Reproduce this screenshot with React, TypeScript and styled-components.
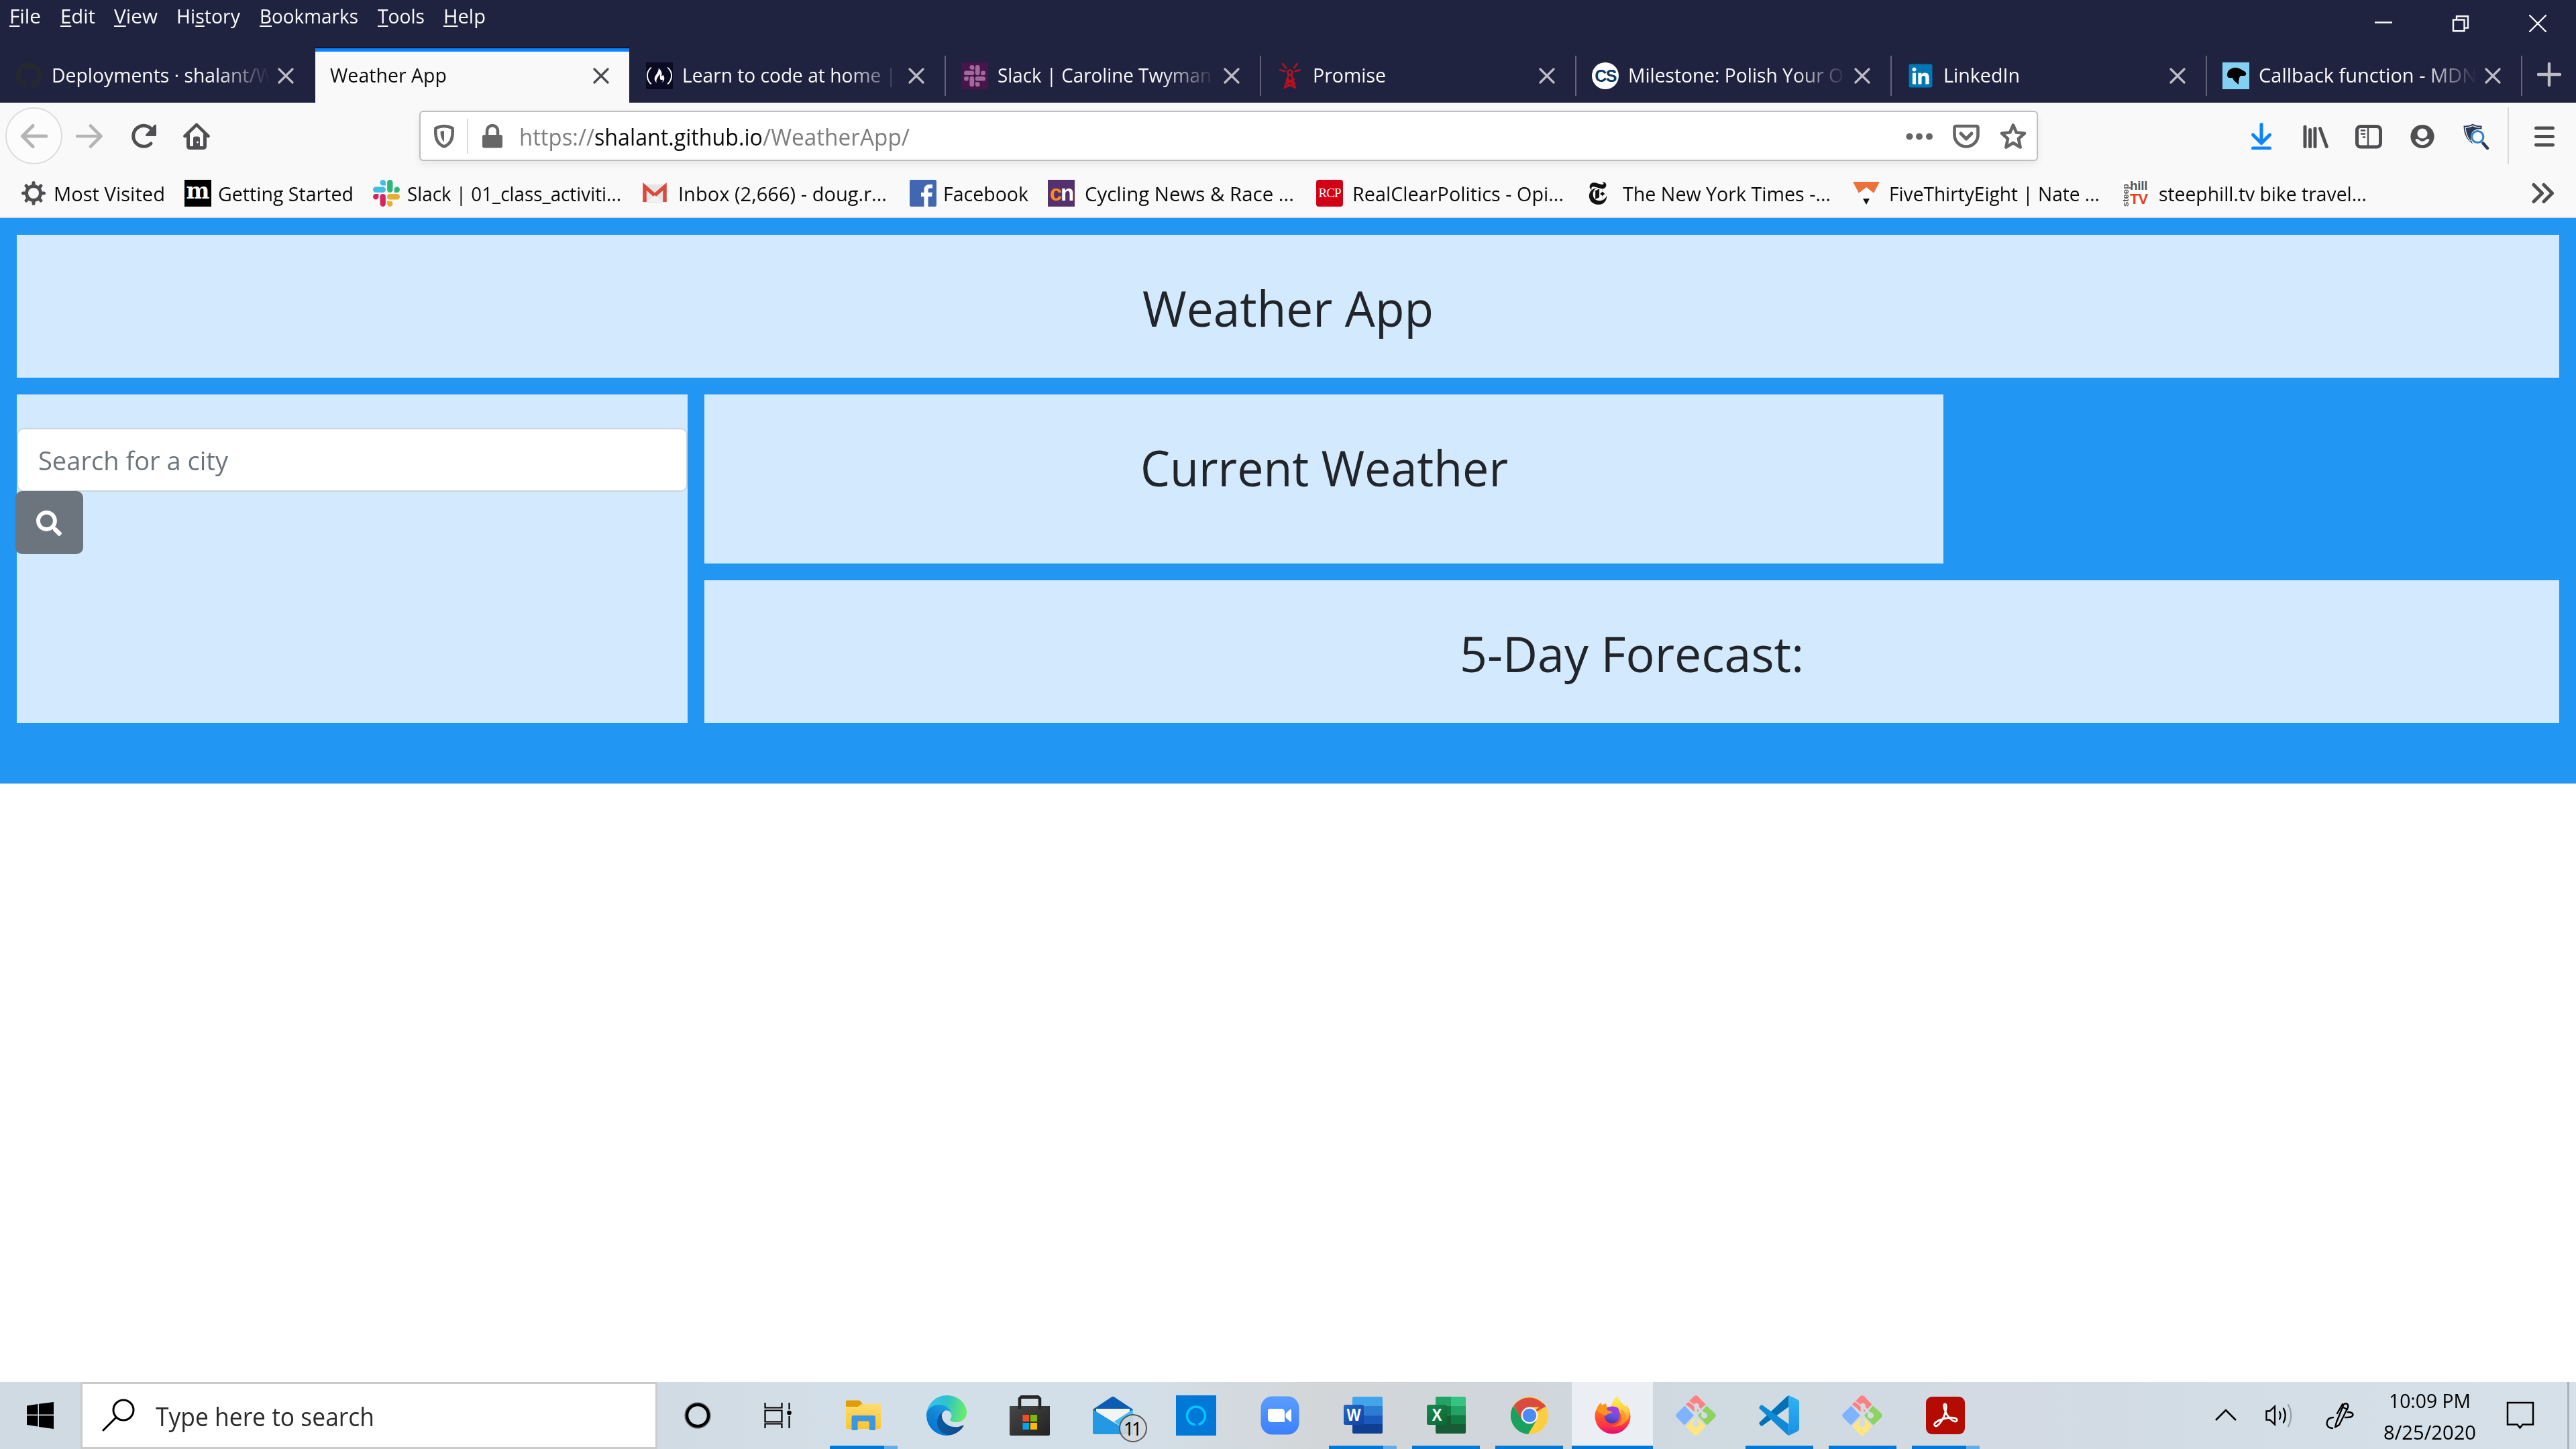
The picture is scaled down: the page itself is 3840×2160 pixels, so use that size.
import React, { useLayoutEffect, useRef, useState } from 'react';
import styled, { createGlobalStyle, css } from 'styled-components';
import { FaGithub, FaLinkedin, FaSearch } from 'react-icons/fa';
import { SiFreecodecamp, SiNewyorktimes } from 'react-icons/si';

const GlobalStyle = createGlobalStyle`
  *, *::before, *::after { box-sizing: border-box; }
  html, body { margin: 0; padding: 0; background: #fff; }
  body { font-family: "Open Sans", "Noto Sans", sans-serif; overflow: hidden; }
  svg { display: block; flex: none; }
`;

/* ---------- text set to a fixed measure ---------- */

const Measure = styled.span<{ $w: number }>`
  display: block;
  flex: none;
  width: ${p => p.$w}px;
  white-space: pre;
`;
const Glyphs = styled.span`
  display: inline-block;
  transform-origin: 0 50%;
`;

function Label({ w, children }: { w: number; children: React.ReactNode }) {
  const ref = useRef<HTMLSpanElement>(null);
  const [scale, setScale] = useState(1);
  useLayoutEffect(() => {
    if (ref.current && ref.current.offsetWidth) setScale(w / ref.current.getBoundingClientRect().width);
  }, [w]);
  return (
    <Measure $w={w}>
      <Glyphs ref={ref} style={{ transform: `scaleX(${scale})` }}>{children}</Glyphs>
    </Measure>
  );
}

/* ---------- layout parts ---------- */

const Screen = styled.div`
  width: 3840px;
  height: 2160px;
  display: flex;
  flex-direction: column;
  background: #fff;
`;

const TitleBar = styled.header`
  height: 72px;
  flex: none;
  display: flex;
  justify-content: space-between;
  background: #202340;
  color: #f9f9fa;
`;
const MenuList = styled.nav`
  display: flex;
  height: 49px;
  padding-left: 14px;
  font-size: 29.4px;
  line-height: 49px;
`;
const MenuEntry = styled.span<{ $after: number }>`
  margin-right: ${p => p.$after}px;
`;
const Accel = styled.span`
  text-decoration: underline;
  text-decoration-thickness: 2px;
  text-underline-offset: 3px;
  text-decoration-skip-ink: none;
`;
const WindowControls = styled.div`
  display: flex;
  align-items: center;
  gap: 89px;
  height: 70px;
  padding-right: 44px;
`;

const TabStrip = styled.div`
  height: 81px;
  flex: none;
  display: flex;
  background: #202340;
  box-shadow: inset 0 -1px 0 #12132b;
`;
const Tab = styled.div<{ $active?: boolean; $sep?: boolean }>`
  position: relative;
  width: 470px;
  height: 81px;
  flex: none;
  display: flex;
  align-items: center;
  padding: 1px 0 0 23px;
  color: #f9f9fa;
  font-size: 29.4px;
  line-height: 44px;
  &::after {
    content: "";
    display: ${p => (p.$sep ? 'block' : 'none')};
    position: absolute;
    right: 0;
    top: 11px;
    width: 2px;
    height: 60px;
    background: #62647a;
  }
  ${p =>
    p.$active &&
    css`
      background: #f9f9fa;
      color: #0c0c0d;
      border-top: 5px solid #0a84ff;
      padding-top: 0;
      padding-bottom: 4px;
      width: 468px;
      margin-right: 2px;
      box-shadow: 0 -2px 0 #12132b;
    `}
`;
const TabTitle = styled.div<{ $fade?: boolean; $lead: number }>`
  flex: 1;
  overflow: hidden;
  margin: 0 0 2px ${p => p.$lead}px;
  ${p => p.$fade && css`mask-image: linear-gradient(to right, #000 calc(100% - 80px), transparent 100%);`}
`;
const CloseSlot = styled.div<{ $active?: boolean }>`
  width: 24px;
  margin: 0 ${p => (p.$active ? 30 : 32)}px 0 12px;
  color: ${p => (p.$active ? '#4a4a4f' : '#bbbcc6')};
`;
const NewTab = styled.div`
  flex: 1;
  display: flex;
  align-items: center;
  justify-content: center;
  padding-bottom: 3px;
`;

const Toolbar = styled.div`
  height: 99px;
  flex: none;
  display: flex;
  align-items: center;
  background: #f9f9fa;
  padding-left: 8px;
  color: #4f4f52;
`;
const BackButton = styled.div`
  width: 85px;
  height: 85px;
  border: 2px solid #dcdcdd;
  border-radius: 50%;
  background: #fcfcfc;
  display: flex;
  align-items: center;
  justify-content: center;
  color: #b5b5b6;
`;
const IconSlot = styled.div<{ $before: number; $color?: string }>`
  margin-left: ${p => p.$before}px;
  color: ${p => p.$color ?? 'inherit'};
`;
const UrlBar = styled.div`
  margin-left: 312px;
  width: 2413px;
  height: 75px;
  display: flex;
  align-items: center;
  border: 2px solid #bebebf;
  border-radius: 6px;
  background: #fff;
  box-shadow: 0 5px 12px rgba(0, 0, 0, 0.07);
  padding: 0 15px;
  color: #666667;
`;
const UrlText = styled.div`
  flex: 1;
  display: flex;
  margin: 3px 0 0 20px;
  font-size: 34px;
  line-height: 50px;
  color: #7e7e7f;
`;
const Host = styled.span`
  color: #0c0c0d;
`;
const Rule = styled.div<{ $h: number; $before: number }>`
  width: 2px;
  height: ${p => p.$h}px;
  margin-left: ${p => p.$before}px;
  background: #dadadb;
`;
const UrlActions = styled.div`
  display: flex;
  gap: 30px;
`;

const BookmarkBar = styled.div`
  height: 73px;
  flex: none;
  display: flex;
  align-items: center;
  background: #f9f9fa;
  border-bottom: 2px solid #dededf;
  padding-left: 30px;
  font-size: 29.4px;
  line-height: 44px;
  color: #0c0c0d;
`;
const Bookmark = styled.div<{ $after: number; $gap: number }>`
  display: flex;
  align-items: center;
  gap: ${p => p.$gap + 1}px;
  margin-right: ${p => p.$after}px;
`;
const BookmarkTitle = styled.div`
  padding-top: 2px;
`;
const Tile = styled.div<{ $bg: string; $fg: string; $size: number; $serif?: boolean; $r?: number; $narrow?: number }>`
  width: 40px;
  height: 40px;
  display: flex;
  align-items: center;
  justify-content: center;
  border-radius: ${p => p.$r ?? 0}px;
  background: ${p => p.$bg};
  color: ${p => p.$fg};
  font: ${p => (p.$serif ? 'normal' : 'bold')} ${p => p.$size}px/36px ${p => (p.$serif ? '"Liberation Serif", serif' : '"Liberation Sans", sans-serif')};
  letter-spacing: ${p => p.$narrow ?? 0}px;
`;
const SlabM = styled.b`
  font: bold 33px/40px "DejaVu Serif", serif;
  padding-bottom: 5px;
`;
const Orange = styled.span`
  color: #ff8a1f;
`;
const SteepIcon = styled.div`
  width: 40px;
  height: 40px;
  display: flex;
  background: #fff;
  font-family: "Liberation Sans", sans-serif;
  font-weight: bold;
  color: #555;
`;
const SteepSide = styled.span`
  writing-mode: vertical-rl;
  transform: rotate(180deg);
  width: 12px;
  height: 40px;
  font-size: 13px;
  line-height: 12px;
`;
const SteepStack = styled.span`
  display: flex;
  flex-direction: column;
  width: 28px;
  font-size: 19px;
  line-height: 18px;
  letter-spacing: -0.3px;
`;
const SteepTv = styled.span`
  color: #f03a1c;
  font-size: 22px;
  line-height: 22px;
  letter-spacing: -1px;
`;
const Overflow = styled.div`
  margin-left: auto;
  margin-right: 32px;
  color: #4f4f52;
`;

/* ---------- weather page ---------- */

const WeatherGrid = styled.main`
  height: 843px;
  flex: none;
  display: grid;
  grid-template-columns: 1000px 1847px 893px;
  grid-template-rows: 213px 252px 213px;
  gap: 25px;
  padding: 25px;
  background: #2196f3;
`;
const Panel = styled.section<{ $area: string }>`
  grid-area: ${p => p.$area};
  background: #d3e9fd;
  padding: 50px 0;
`;
const Heading = styled.h1`
  margin: 0;
  display: flex;
  justify-content: center;
  font-size: 74px;
  font-weight: 400;
  line-height: 118px;
  color: #212529;
`;
const CityField = styled.div`
  height: 95px;
  display: flex;
  align-items: center;
  padding: 1px 0 0 30px;
  border: 2px solid #ced4da;
  border-radius: 10px;
  background: #fff;
  color: #6c757d;
  font-size: 39px;
  line-height: 58px;
`;
const SearchButton = styled.div`
  width: 101px;
  height: 94px;
  margin-left: -2px;
  margin-top: -1px;
  display: flex;
  align-items: center;
  justify-content: center;
  padding: 2px 2px 0 0;
  border-radius: 10px;
  background: #6c757d;
  color: #fff;
`;

/* ---------- task bar ---------- */

const TaskBar = styled.footer`
  margin-top: auto;
  height: 100px;
  display: flex;
  background: linear-gradient(to right, #d0dae3 0, #d1dbe4 980px, #d3dfe8 1300px, #d3dfe8 1700px, #d3d6d8 1960px, #d0d6dc 2280px, #cfdae1 2560px, #d3dae3 3000px, #d2dde6 3300px, #d5e0e9 3840px);
`;
const Start = styled.div`
  width: 120px;
  display: flex;
  align-items: center;
  justify-content: center;
`;
const TaskSearch = styled.div`
  width: 860px;
  display: flex;
  align-items: center;
  gap: 30px;
  padding-left: 29px;
  border: 3px solid #cbcbcb;
  background: #fff;
  color: #2b2b2b;
  font-size: 37.5px;
  line-height: 54px;
`;
const TaskSearchText = styled.div`
  padding-top: 4px;
`;
const ShellButton = styled.div`
  width: 120px;
  display: flex;
  align-items: center;
  justify-content: center;
`;
const AppList = styled.div`
  display: flex;
  margin-left: 5px;
`;
const AppButton = styled.div<{ $state?: 'open' | 'multi' | 'active' }>`
  position: relative;
  width: 121px;
  height: 100px;
  margin: 0 1.55px;
  display: flex;
  align-items: center;
  justify-content: center;
  background: ${p => (p.$state === 'active' ? '#ebeff3' : 'transparent')};
  &::after {
    content: "";
    position: absolute;
    bottom: 0;
    height: 5px;
    left: ${p => (p.$state === 'active' ? 0 : 10)}px;
    right: ${p => (p.$state === 'active' ? 0 : 10)}px;
    display: ${p => (p.$state ? 'block' : 'none')};
    background: ${p => (p.$state === 'multi' ? 'linear-gradient(to right, #0078d7 81px, #65ade8 81px)' : '#0078d7')};
  }
`;
const Badge = styled.div`
  position: absolute;
  left: 69px;
  top: 48px;
  width: 42px;
  height: 42px;
  border: 2px solid #55595d;
  border-radius: 50%;
  background: rgba(214, 216, 218, 0.85);
  color: #000;
  display: flex;
  align-items: center;
  justify-content: center;
  font: 500 28px/38px "Open Sans", sans-serif;
  letter-spacing: -4px;
  padding-right: 4px;
`;
const Tray = styled.div`
  margin-left: auto;
  display: flex;
  align-items: center;
`;
const TrayItem = styled.div<{ $after: number }>`
  margin-right: ${p => p.$after}px;
`;
const Clock = styled.div`
  display: flex;
  flex-direction: column;
  align-items: center;
  width: 138px;
  margin-right: 45px;
  padding-top: 3px;
  font-size: 29.4px;
  line-height: 47px;
  color: #000;
`;
const ShowDesktop = styled.div`
  width: 13px;
  height: 100px;
  border-left: 3px solid #a9b3bb;
`;

/* ---------- line icons ---------- */

type BoxProps = { w?: number; h?: number; vb?: string; children: React.ReactNode };
const Ico = ({ w = 40, h = 40, vb, children }: BoxProps) => (
  <svg width={w} height={h} viewBox={vb ?? `0 0 ${w} ${h}`} fill="none" stroke="currentColor" strokeLinecap="round" strokeLinejoin="round">
    {children}
  </svg>
);

const Cross = () => (
  <Ico w={24} h={24}><path d="M2 2 22 22M22 2 2 22" strokeWidth="3.2" /></Ico>
);
const ArrowLeft = () => (
  <Ico><path d="M38 20H3M18 4.500 2.500 20 18 35.500" strokeWidth="5" /></Ico>
);
const ArrowRight = () => (
  <Ico><path d="M2 20H37M22 4.500 37.500 20 22 35.500" strokeWidth="4.600" /></Ico>
);
const Reload = () => (
  <Ico>
    <path d="M31 31A15.500 15.500 0 1 1 33 11" strokeWidth="5" />
    <path d="M37.500 4V18.500H24.500Z" fill="currentColor" strokeWidth="3" />
  </Ico>
);
const Home = () => (
  <Ico>
    <path d="M2.500 20 20 2.800 37.500 20" strokeWidth="4.600" />
    <path d="M7.500 18V34.500Q7.500 37.500 10.500 37.500H29.500Q32.500 37.500 32.500 34.500V18" strokeWidth="5" />
    <path d="M15 37V23.500Q15 20.500 18 20.500H22Q25 20.500 25 23.500V37Z" fill="currentColor" stroke="none" />
    <circle cx="21.500" cy="29" r="1.500" fill="#f9f9fa" stroke="none" />
  </Ico>
);
const Shield = () => (
  <Ico>
    <path d="M20 5Q26 5 32.500 8Q33.500 17 31 25Q28 32.500 20 35.500Q12 32.500 9 25Q6.500 17 7.500 8Q14 5 20 5Z" strokeWidth="4.600" />
    <path d="M20 12Q17 12 14.500 13Q14.500 24 20 28.500Z" fill="currentColor" stroke="none" />
  </Ico>
);
const Lock = () => (
  <Ico>
    <rect x="5" y="18" width="30" height="19.500" rx="3" fill="currentColor" stroke="none" />
    <path d="M12 18V12A8 8 0 0 1 28 12V18" strokeWidth="4.500" />
  </Ico>
);
const Dots = () => (
  <Ico>
    <g fill="currentColor" stroke="none"><circle cx="5.500" cy="20.500" r="5" /><circle cx="20" cy="20.500" r="5" /><circle cx="35" cy="20.500" r="5" /></g>
  </Ico>
);
const Pocket = () => (
  <Ico>
    <path d="M5 5H35Q37.500 5 37.500 7.500V18A17.500 17.500 0 0 1 2.500 18V7.500Q2.500 5 5 5Z" strokeWidth="4.600" />
    <path d="M12 16 20 24 28 16" strokeWidth="5" />
  </Ico>
);
const Star = () => (
  <Ico><path d="M20 3.500 24.800 14.500 37 15.800 28 23.800 30.600 36.500 20 30 9.400 36.500 12 23.800 3 15.800 15.200 14.500Z" strokeWidth="4.600" /></Ico>
);
const Download = () => (
  <Ico>
    <path d="M20 2.500V29M7.500 18 20 30.500 32.500 18" strokeWidth="5" />
    <path d="M7.500 38H32.500" strokeWidth="5" />
  </Ico>
);
const Library = () => (
  <Ico>
    <path d="M5 6V35.500M12.600 10.500V35.500M20 8.500V35.500M27.500 8.500 37.300 35.500" strokeWidth="5" />
  </Ico>
);
const Sidebar = () => (
  <Ico>
    <rect x="2.500" y="5.500" width="35" height="30.500" rx="5.500" strokeWidth="5" />
    <path d="M19 6V35" strokeWidth="2.400" />
    <path d="M9 11.500H14M9 16.500H14M12 21.500H14" strokeWidth="2.600" />
  </Ico>
);
const Account = () => (
  <Ico>
    <circle cx="20" cy="20.500" r="17.600" fill="currentColor" stroke="none" />
    <circle cx="20" cy="16" r="7.600" fill="#f9f9fa" stroke="none" />
    <path d="M9.500 26Q9.500 23 14 24.500Q20 31 26 24.500Q30.500 23 30.500 26Q27 33.300 20 33.300Q13 33.300 9.500 26Z" fill="#f9f9fa" stroke="none" />
  </Ico>
);
const PrivacySearch = () => (
  <Ico>
    <path d="M1.500 4.500Q9 5 15 1.700Q21 5 28.500 4.500V9.500Q14 8 12 20Q11.500 26 15.500 31.500Q2 24 1.500 4.500Z" fill="#2a3a57" stroke="none" />
    <path d="M4 7Q5 20 11.500 27M4 7Q10 7 15 4.500Q20 7 26 7.200" stroke="#f4f4f5" strokeWidth="1.300" />
    <circle cx="22.300" cy="21" r="8.600" stroke="#2f83cc" strokeWidth="3" fill="#f9f9fa" />
    <path d="M30.500 30.500 37 38" stroke="#2a3a57" strokeWidth="4.400" />
  </Ico>
);
const Hamburger = () => (
  <Ico><path d="M7.500 8H32.500M7.500 20.500H32.500M7.500 33H32.500" strokeWidth="5" /></Ico>
);
const Chevrons = () => (
  <Ico w={34} h={32}><path d="M3 3.500 15.500 16 3 28.500M18 3.500 30.500 16 18 28.500" strokeWidth="5" /></Ico>
);
const Minimize = () => <Ico w={26} h={26}><path d="M0 11.500H26" strokeWidth="2.500" strokeLinecap="butt" /></Ico>;
const Restore = () => (
  <Ico w={26} h={26}>
    <path d="M2 7.500H18.500V24.200H2Z M7 7V2.200H24V19.500H19" strokeWidth="2.400" strokeLinejoin="miter" strokeLinecap="butt" />
  </Ico>
);
const WinClose = () => <Ico w={26} h={26}><path d="M1 1 25 25M25 1 1 25" strokeWidth="2.400" /></Ico>;
const Plus = () => (
  <Ico w={36} h={36}><path d="M18 2V34M2 18H34" stroke="#bbbcc6" strokeWidth="4.400" /></Ico>
);
const Gear = () => (
  <Ico>
    <circle cx="20" cy="20" r="10.500" strokeWidth="5" />
    <g strokeWidth="5"><path d="M20 4.500V7M20 33V35.500M4.500 20H7M33 20H35.500M9 9 10.800 10.800M29.200 29.200 31 31M9 31 10.800 29.200M29.200 10.800 31 9" /></g>
  </Ico>
);

/* ---------- brand icons ---------- */

const slackHues = { b: '#44bee0', g: '#2eb67d', r: '#d7265e', y: '#e8ae32' };
const Slack = ({ size = 40, hues = slackHues }: { size?: number; hues?: typeof slackHues }) => (
  <svg width={size} height={size} viewBox="0 0 40 40">
    <g fill={hues.b}><rect x="0" y="10.500" width="19" height="8.400" rx="4.200" /><path d="M14.800 0A4.200 4.200 0 0 1 19 4.200V8.400H14.800A4.200 4.200 0 0 1 14.800 0Z" /></g>
    <g fill={hues.g}><rect x="21.100" y="0" width="8.400" height="19" rx="4.200" /><path d="M40 14.700A4.200 4.200 0 0 1 35.800 18.900H31.600V14.700A4.200 4.200 0 0 1 40 14.700Z" /></g>
    <g fill={hues.y}><rect x="21" y="21.100" width="19" height="8.400" rx="4.200" /><path d="M25.300 40A4.200 4.200 0 0 1 21.100 35.800V31.600H25.300A4.200 4.200 0 0 1 25.300 40Z" /></g>
    <g fill={hues.r}><rect x="10.500" y="21" width="8.400" height="19" rx="4.200" /><path d="M0 25.300A4.200 4.200 0 0 1 4.200 21.100H8.400V25.300A4.200 4.200 0 0 1 0 25.300Z" /></g>
  </svg>
);
const mauve = '#a06b9c';
const SlackDim = () => (
  <Tile $bg="#48154a" $fg="#fff" $size={10}><Slack size={32} hues={{ b: mauve, g: mauve, r: mauve, y: mauve }} /></Tile>
);
const Tower = () => (
  <Ico>
    <g stroke="#b5121f" strokeWidth="2.600">
      <path d="M18 18 12 38M22 18 28 38M14.500 30 26 25M25.500 30 15 25M13 37 27 31M27 37 14 31" />
      <circle cx="20" cy="15" r="3.500" />
      <path d="M14 8 9 2M26 8 31 2M12.500 13 5 11.500M27.500 13 35 11.500M18 30H22" />
    </g>
  </Ico>
);
const Dino = () => (
  <Ico>
    <rect width="40" height="40" fill="#83d0f2" stroke="none" />
    <path d="M7 20Q6 12 14 9Q20 6 27 10L34 14Q37 18 33 20H27Q24 22 24 33L17 27L15 23L9 23Z" fill="#000" stroke="none" />
  </Ico>
);
const Gmail = () => (
  <Ico>
    <rect x="2" y="7" width="36" height="27" rx="2" fill="#e6e5e4" stroke="none" />
    <path d="M5 33V10L20 23 35 10V33" stroke="#d94a3d" strokeWidth="5.500" strokeLinejoin="miter" strokeLinecap="butt" />
    <path d="M8 33 20 23 32 33Z" fill="#f3f2f1" stroke="none" />
  </Ico>
);
const Facebook = () => (
  <Ico>
    <rect width="40" height="40" rx="2.500" fill="#4267b2" stroke="none" />
    <path d="M27.500 40V25H33L33.800 19H27.500V15.500C27.500 13.500 28.300 12.500 30.500 12.500H34V7.200C33 7 31.500 7 29.500 7C24.500 7 21.500 10 21.500 15V19H17V25H21.500V40Z" fill="#fff" stroke="none" />
  </Ico>
);
const Fox538 = () => (
  <Ico>
    <path d="M0 3H40L31 20 20 12 9 20Z" fill="#ed713a" stroke="none" />
    <path d="M9 20 20 11 31 20 25 28H15Z" fill="#fff" stroke="none" />
    <path d="M15 28H25L20 37Z" fill="#111" stroke="none" />
  </Ico>
);

const WinLogo = () => (
  <svg width="40" height="40" viewBox="0 0 40 40" fill="#000">
    <path d="M0 5.500 16.500 3V18.500H0ZM18 2.800 40 0V18.500H18ZM0 20.300H16.500V36.500L0 34ZM18 20.300H40V40L18 37Z" />
  </svg>
);
const BigLens = () => (
  <Ico w={50} h={50}><g stroke="#000" strokeWidth="3"><circle cx="32" cy="17" r="15" /><path d="M21 28 2 47" /></g></Ico>
);
const Cortana = () => (
  <svg width="40" height="40" viewBox="0 0 40 40" fill="none">
    <circle cx="20" cy="20" r="18.500" stroke="#7b8287" strokeWidth="2.500" />
    <circle cx="20" cy="20" r="16" stroke="#000" strokeWidth="4.500" />
  </svg>
);
const TaskView = () => (
  <Ico w={42} h={40}>
    <g stroke="#000" strokeWidth="2.200" strokeLinecap="butt" strokeLinejoin="miter">
      <path d="M1.500 12.500H26.500V29.500H1.500ZM1.500 1V8.500H26.500V1M1.500 39V32.500H26.500V39M37.500 1V11M37.500 21V39" />
      <circle cx="37.500" cy="16" r="3.300" fill="#000" stroke="none" />
    </g>
  </Ico>
);
const Explorer = () => (
  <svg width="54" height="46" viewBox="0 0 54 46">
    <defs><linearGradient id="ex" x2="0" y2="1"><stop offset="0" stopColor="#ffdb74" /><stop offset="1" stopColor="#fdc52e" /></linearGradient></defs>
    <path d="M1 10V2Q1 0.500 3 0.500H20Q22 0.500 23 2L26 6 23 10Z" fill="#e09d05" />
    <path d="M1 10H19L25 5.500H51Q53 5.500 53 8V40Q53 43 51 43H3Q1 43 1 41Z" fill="url(#ex)" />
    <path d="M9.500 45V26Q9.500 23 12.500 23H42Q45 23 45 26V45H36V34Q36 31.500 34 31.500H20.500Q18.500 31.500 18.500 34V45Z" fill="#3a97e0" />
  </svg>
);
const Edge = () => (
  <svg width="60" height="60" viewBox="0 0 256 256">
    <defs>
      <linearGradient id="e1" x1="60" y1="178" x2="240" y2="178" gradientUnits="userSpaceOnUse"><stop offset="0" stopColor="#0c59a4" /><stop offset="1" stopColor="#114a8b" /></linearGradient>
      <linearGradient id="e2" x1="150" y1="90" x2="40" y2="220" gradientUnits="userSpaceOnUse"><stop offset="0" stopColor="#1b9de2" /><stop offset="0.500" stopColor="#1485d6" /><stop offset="1" stopColor="#0078d4" /></linearGradient>
      <linearGradient id="e3" x1="20" y1="60" x2="240" y2="110" gradientUnits="userSpaceOnUse"><stop offset="0" stopColor="#35c1f1" /><stop offset="0.450" stopColor="#2dc3c8" /><stop offset="1" stopColor="#66eb6e" /></linearGradient>
    </defs>
    <path fill="url(#e1)" d="M231 190.500c-3.400 1.800-6.900 3.400-10.500 4.700a101 101 0 0 1-35.500 6.400c-46.700 0-87.400-32.100-87.400-73.400a31.200 31.200 0 0 1 16.300-27.200c-42.300 1.800-53.100 45.800-53.100 71.600 0 73 67.200 80.400 81.700 80.400 7.800 0 19.600-2.300 26.700-4.500l1.300-.4a128.300 128.300 0 0 0 66.600-52.800 4 4 0 0 0-6.100-4.800Z" />
    <path fill="url(#e2)" d="M105.700 241.400A79.200 79.200 0 0 1 83 220a80.700 80.700 0 0 1 29.500-120c3.100-1.500 8.500-4.100 15.500-4a32.400 32.400 0 0 1 25.700 13 31.900 31.900 0 0 1 6.400 18.700c0-.2 24.500-79.600-80-79.600-43.900 0-80 41.600-80 78.200a130 130 0 0 0 12.100 56 128 128 0 0 0 156.400 67 75.500 75.500 0 0 1-62.900-7.900Z" />
    <path fill="url(#e3)" d="M152.300 148.900c-.8 1-3.300 2.500-3.300 5.600 0 2.600 1.700 5.100 4.700 7.200 14.400 10 41.500 8.700 41.600 8.700a59.600 59.600 0 0 0 30.300-8.300A61.400 61.400 0 0 0 256 109.200c.3-22.400-8-37.300-11.300-43.900C223.500 23.800 177.700 0 128 0A128 128 0 0 0 0 126.200C.5 89.700 36.800 60.200 80 60.200c3.500 0 23.500.3 42 10 16.300 8.600 24.900 19 30.900 29.300 6.200 10.700 7.200 24.100 7.200 29.500s-2.700 13.400-7.800 19.900Z" />
  </svg>
);
const Store = () => (
  <svg width="60" height="60" viewBox="0 0 60 60">
    <defs><linearGradient id="st" x2="1" y2="1"><stop offset="0" stopColor="#474747" /><stop offset="1" stopColor="#222" /></linearGradient></defs>
    <path d="M0 16H60V58Q60 60 58 60H2Q0 60 0 58Z" fill="url(#st)" />
    <path d="M15 20V5L18.500 1.500H41.500L45 5V20" fill="none" stroke="#262626" strokeWidth="4.500" />
    <path d="M17 2.500H43" stroke="#262626" strokeWidth="5" />
    <path d="M19.500 29H29V39H19.500Z" fill="#f25022" /><path d="M31 29H41V39H31Z" fill="#7fba00" />
    <path d="M19.500 41H29V51H19.500Z" fill="#00a4ef" /><path d="M31 41H41V51H31Z" fill="#ffb900" />
  </svg>
);
const Mail = () => (
  <svg width="60" height="58" viewBox="0 0 60 58">
    <path d="M0 20 28 1.500Q30 0 32 1.500L60 20V24L0 24Z" fill="#0a5cb5" />
    <path d="M5 19H55V24L32 40H28L5 26Z" fill="#f3f3f4" />
    <path d="M0 20 60 57H2Q0 57 0 55Z" fill="#2299e2" />
    <path d="M60 20 32 38 60 56Z" fill="#55c5f2" /><path d="M32 38 60 20V57H58Z" fill="#4abdf0" />
  </svg>
);
const Alexa = () => (
  <svg width="60" height="60" viewBox="0 0 60 60" fill="none">
    <rect width="60" height="60" fill="#0078d7" />
    <path d="M26.500 43.500A13.500 13.500 0 1 1 33.500 43.500" stroke="#00c8ff" strokeWidth="3.400" />
    <path d="M26 41Q30 43 30 46Q27 45 24.500 42Z" fill="#00c8ff" />
  </svg>
);
const Zoom = () => (
  <svg width="58" height="58" viewBox="0 0 58 58">
    <defs><linearGradient id="zm" x2="0" y2="1"><stop offset="0" stopColor="#5a9dff" /><stop offset="1" stopColor="#3c80fb" /></linearGradient></defs>
    <rect x="0.500" y="0.500" width="57" height="57" rx="17" fill="url(#zm)" />
    <path d="M14 19H31Q36 19 36 24V39H17Q11 39 11 33V22Q11 19 14 19ZM37.500 26 44 20Q46 19 46 21V37Q46 39 44 38L37.500 32Z" fill="#fff" />
  </svg>
);
const OfficeLetter = styled.text`
  font: bold 25px "Liberation Sans", sans-serif;
  fill: #fff;
  text-anchor: middle;
`;
const Word = () => (
  <svg width="60" height="56" viewBox="0 0 60 56">
    <defs><linearGradient id="wd" x2="1" y2="1"><stop offset="0" stopColor="#2368c4" /><stop offset="1" stopColor="#1143a6" /></linearGradient></defs>
    <path d="M14 2Q14 0 16 0H57Q59 0 59 2V13.500H14Z" fill="#41a5ee" /><path d="M14 13.500H59V27.500H14Z" fill="#2b7cd3" />
    <path d="M14 27.500H59V41H14Z" fill="#185abd" /><path d="M14 41H59V53Q59 55 57 55H16Q14 55 14 53Z" fill="#103f91" />
    <rect x="1" y="12" width="30" height="30" rx="2.500" fill="url(#wd)" />
    <OfficeLetter x="16" y="36" textLength="21" lengthAdjust="spacingAndGlyphs">W</OfficeLetter>
  </svg>
);
const Excel = () => (
  <svg width="60" height="56" viewBox="0 0 60 56">
    <defs><linearGradient id="xl" x2="1" y2="1"><stop offset="0" stopColor="#18884f" /><stop offset="1" stopColor="#0b6631" /></linearGradient></defs>
    <path d="M14 2Q14 0 16 0H37V13.500H14Z" fill="#21a366" /><path d="M37 0H57Q59 0 59 2V13.500H37Z" fill="#33c481" />
    <path d="M14 13.500H37V27.500H14Z" fill="#107c41" /><path d="M37 13.500H59V27.500H37Z" fill="#21a366" />
    <path d="M14 27.500H59V41H14Z" fill="#185c37" /><path d="M37 27.500H59V41H37Z" fill="#107c41" />
    <path d="M14 41H59V53Q59 55 57 55H16Q14 55 14 53Z" fill="#185c37" />
    <rect x="1" y="12" width="30" height="30" rx="2.500" fill="url(#xl)" />
    <OfficeLetter x="16" y="36" textLength="15" lengthAdjust="spacingAndGlyphs">X</OfficeLetter>
  </svg>
);
const Chrome = () => (
  <svg width="56" height="56" viewBox="0 0 56 56">
    <circle cx="28" cy="28" r="28" fill="#ffcd40" />
    <path d="M28 28 51.500 15A28 28 0 0 0 4.500 13.500L16 34 28 15.500H52.500A28 28 0 0 0 49 10Z" fill="#db4a3f" />
    <path d="M4 13.500A28 28 0 0 0 26 56L38.500 35 28 40 17 34.500Z" fill="#1aa15f" />
    <circle cx="28" cy="28" r="12.500" fill="#f4f4f4" /><circle cx="28" cy="28" r="10.200" fill="#4c8bf5" />
  </svg>
);
const Firefox = () => (
  <svg width="54" height="56" viewBox="0 0 54 56">
    <defs>
      <linearGradient id="f1" x2="0" y2="1"><stop offset="0.150" stopColor="#ff9a1a" /><stop offset="0.500" stopColor="#ff5a2c" /><stop offset="0.780" stopColor="#ff3344" /><stop offset="1" stopColor="#dc0c7c" /></linearGradient>
      <linearGradient id="f3" x2="0" y2="1"><stop offset="0" stopColor="#fff44f" /><stop offset="0.450" stopColor="#ffd23a" /><stop offset="1" stopColor="#ff6a2a" /></linearGradient>
      <linearGradient id="f2" x1="0.600" y1="0" x2="0.400" y2="1"><stop offset="0" stopColor="#b535e6" /><stop offset="0.550" stopColor="#6a52e0" /><stop offset="1" stopColor="#4535a5" /></linearGradient>
    </defs>
    <path d="M34 0Q38 8 43 12Q45.500 14 47 17Q47.500 14 46.500 12Q53 19 53.500 29A26.500 26.500 0 0 1 0.500 29Q0.500 22 4 17Q5 12 10 9L10.500 13.500Q13 11 17 10.500L18 15.500Q22 15 25 16Q26 6 34 0Z" fill="url(#f1)" />
    <path d="M34 0Q25.500 6 25 16Q36 18 40 28Q42 36 36 44Q50 39 52.500 27Q52 18 46.500 12Q47.500 14 47 17Q45.500 14 43 12Q38 8 34 0Z" fill="url(#f3)" />
    <path d="M26 14.500Q32 14 35 17L36.500 20Q38 24 37.500 28.500A11.500 11.500 0 0 1 14.500 28Q14.500 15 26 14.500Z" fill="url(#f2)" />
    <path d="M10 9Q5 14 3 21Q9 25 14.500 28Q18 28 20 25.500Q24 25.500 26.500 23.500Q25 21 19.500 20.500Q18 18 18 15.500L17 10.500Q13 11 10.500 13.500Z" fill="#ff9219" />
    <path d="M38 20Q42 27 39 35Q34 43 25 44Q37 46 44 38Q49 28 42 20Z" fill="#ff8e22" opacity="0.700" />
  </svg>
);
const GitApp = () => (
  <svg width="60" height="60" viewBox="0 0 60 60">
    <path d="M27 1.500Q30 -1 33 1.500L44.500 13.500 30.500 27 15 13.500Z" fill="#ff8080" />
    <path d="M13.500 15.500 27 30 13 44.500 1.500 33Q-1 30 1.500 27Z" fill="#80b3ff" />
    <path d="M46 15.500 58.500 27Q61 30 58.500 33L46.500 44.500 33 30Z" fill="#8dd35f" />
    <path d="M30 32 45 46 33 58.500Q30 61.500 27 58.500L15 46Z" fill="#ffe680" />
    <g stroke="#d2dce3" fill="none" strokeLinecap="round">
      <path d="M20 9.500 32 18" strokeWidth="2" />
      <path d="M30 15V43" strokeWidth="4.500" />
      <path d="M31 16 42 28" strokeWidth="3.500" />
      <path d="M19 18 30 30" strokeWidth="2.500" />
    </g>
    <g fill="#d2dce3"><circle cx="31" cy="15.500" r="3.800" /><circle cx="42.500" cy="30" r="4.600" /><circle cx="30" cy="42.500" r="4.800" /></g>
  </svg>
);
const VsCode = () => (
  <svg width="60" height="60" viewBox="0 0 60 60">
    <defs><linearGradient id="vs" x2="0" y2="1"><stop offset="0" stopColor="#2db4f5" /><stop offset="1" stopColor="#1a8fe6" /></linearGradient></defs>
    <path d="M44.500 0.500V17L5 45.500Q3.500 46 2.500 45L0.500 42.500Q0 41 1 40L42 1.500Q43.500 0 44.500 0.500Z" fill="#0071b5" />
    <path d="M44.500 59.500V43L5 14.500Q3.500 14 2.500 15L0.500 17.500Q0 19 1 20L42 58.500Q43.500 60 44.500 59.500Z" fill="#0e8bd8" />
    <path d="M44.500 0 57 6Q60 7.500 60 10V50Q60 52.500 57 54L44.500 60Z" fill="url(#vs)" />
  </svg>
);
const Acrobat = () => (
  <svg width="58" height="56" viewBox="0 0 58 56" fill="none">
    <rect width="58" height="56" rx="9" fill="#b30b00" />
    <path d="M13 43C10 39 20 34 31 32C40 30 48 32 46 36C43 40 33 32 29 22C26 15 26 11 28.500 11C31.500 11 30.500 20 27 29C22 40 16 46 13 43Z" stroke="#fff" strokeWidth="2.800" />
  </svg>
);
const Caret = () => <Ico w={34} h={20}><path d="M2 17 17 2 32 17" stroke="#000" strokeWidth="2.600" strokeLinecap="butt" strokeLinejoin="miter" /></Ico>;
const Speaker = () => (
  <Ico w={42} h={38}>
    <g stroke="#000" strokeWidth="2.300" strokeLinejoin="miter">
      <path d="M1.500 12.500H6.500L14 5.500V32.500L6.500 25.500H1.500Z" />
      <path d="M21 13.500Q24 19 21 24.500M27 8.500Q32.500 19 27 29.500" />
      <path d="M34 3Q42.500 19 34 35.500" stroke="#98a1a8" />
    </g>
  </Ico>
);
const Pen = () => (
  <Ico w={42} h={42}>
    <g stroke="#000" strokeWidth="2.400">
      <path d="M16 31 14 38.500 20 35 33 9Q34 5 31.500 3.500Q28.500 2.500 26.500 5L16 31M26 9 32 12" />
      <path d="M11 24Q2 24 1.500 33Q2 39.500 10 40M33 16Q40 16 40.500 20Q40 24.500 29 24M17 18 25 4" />
    </g>
  </Ico>
);
const Notice = () => <Ico w={42} h={42}><path d="M2 2H40V34.500H24.500L20.500 39.500 16.500 34.500H2Z" stroke="#000" strokeWidth="2.500" strokeLinejoin="miter" /></Ico>;

/* ---------- content ---------- */

const menus = [
  { pre: '', key: 'F', rest: 'ile', w: 47, after: 29 },
  { pre: '', key: 'E', rest: 'dit', w: 52, after: 28 },
  { pre: '', key: 'V', rest: 'iew', w: 65, after: 28 },
  { pre: 'Hi', key: 's', rest: 'tory', w: 95, after: 29 },
  { pre: '', key: 'B', rest: 'ookmarks', w: 147, after: 29 },
  { pre: '', key: 'T', rest: 'ools', w: 70, after: 28 },
  { pre: '', key: 'H', rest: 'elp', w: 63, after: 0 },
];

const tabs = [
  { icon: <FaGithub size={40} color="#24292e" />, title: 'Deployments · shalant/W', w: 331, lead: 14, fade: true },
  { title: 'Weather App', w: 174, lead: -1, active: true },
  { icon: <Tile $bg="#0a0a23" $fg="#fff" $size={10}><SiFreecodecamp size={38} color="#fff" /></Tile>, title: 'Learn to code at home |', w: 319, lead: 14, fade: true, sep: true },
  { icon: <SlackDim />, title: 'Slack | Caroline Twyman', w: 319, lead: 14, fade: true, sep: true },
  { icon: <Tower />, title: 'Promise', w: 109, lead: 14, sep: true },
  { icon: <Tile $bg="#fff" $fg="#0b3a66" $size={25} $r={20} $narrow={-1.5}>CS</Tile>, title: 'Milestone: Polish Your O', w: 321, lead: 14, fade: true, sep: true },
  { icon: <FaLinkedin size={40} color="#0077b5" style={{ background: 'radial-gradient(#fff 60%, transparent 61%)' }} />, title: 'LinkedIn', w: 114, lead: 14, sep: true },
  { icon: <Dino />, title: 'Callback function - MDN', w: 325, lead: 14, fade: true, sep: true },
];

const bookmarks = [
  { icon: <IconSlot $before={0} $color="#4f4f52"><Gear /></IconSlot>, title: 'Most Visited', w: 166, gap: 9, after: 29 },
  { icon: <Tile $bg="#000" $fg="#fff" $size={30}><SlabM>m</SlabM></Tile>, title: 'Getting Started', w: 202, gap: 9, after: 29 },
  { icon: <Slack />, title: 'Slack | 01_class_activiti...', w: 319, gap: 10, after: 30 },
  { icon: <Gmail />, title: 'Inbox (2,666) - doug.r...', w: 311, gap: 14, after: 34 },
  { icon: <Facebook />, title: 'Facebook', w: 127, gap: 9, after: 29 },
  { icon: <Tile $bg="#54306f" $fg="#fff" $size={33} $narrow={-2}><Orange>c</Orange>n</Tile>, title: 'Cycling News & Race ...', w: 312, gap: 14, after: 33 },
  { icon: <Tile $bg="#d30015" $fg="#fff" $size={19} $serif $r={4} $narrow={-1}>RCP</Tile>, title: 'RealClearPolitics - Opi...', w: 315, gap: 13, after: 31 },
  { icon: <IconSlot $before={0} $color="#111"><SiNewyorktimes size={40} style={{ padding: 3 }} /></IconSlot>, title: 'The New York Times -...', w: 310, gap: 16, after: 33 },
  { icon: <Fox538 />, title: 'FiveThirtyEight | Nate ...', w: 314, gap: 13, after: 33 },
  {
    icon: (
      <SteepIcon>
        <SteepSide>steep</SteepSide>
        <SteepStack>hill<SteepTv>TV</SteepTv></SteepStack>
      </SteepIcon>
    ),
    title: 'steephill.tv bike travel...', w: 310, gap: 14, after: 0,
  },
];

const apps: { icon: React.ReactNode; state?: 'open' | 'multi' | 'active'; badge?: string }[] = [
  { icon: <Explorer />, state: 'multi' },
  { icon: <Edge /> },
  { icon: <Store /> },
  { icon: <Mail />, badge: '11' },
  { icon: <Alexa /> },
  { icon: <Zoom /> },
  { icon: <Word />, state: 'multi' },
  { icon: <Excel />, state: 'open' },
  { icon: <Chrome />, state: 'open' },
  { icon: <Firefox />, state: 'active' },
  { icon: <GitApp /> },
  { icon: <VsCode />, state: 'open' },
  { icon: <GitApp />, state: 'open' },
  { icon: <Acrobat />, state: 'multi' },
];

export default function App() {
  return (
    <>
      <GlobalStyle />
      <Screen>
        <TitleBar>
          <MenuList>
            {menus.map(m => (
              <MenuEntry key={m.key + m.rest} $after={m.after}>
                <Label w={m.w}>{m.pre}<Accel>{m.key}</Accel>{m.rest}</Label>
              </MenuEntry>
            ))}
          </MenuList>
          <WindowControls><Minimize /><Restore /><WinClose /></WindowControls>
        </TitleBar>

        <TabStrip>
          {tabs.map(t => (
            <Tab key={t.title} $active={t.active} $sep={t.sep}>
              {t.icon}
              <TabTitle $fade={t.fade} $lead={t.lead}><Label w={t.w}>{t.title}</Label></TabTitle>
              <CloseSlot $active={t.active}><Cross /></CloseSlot>
            </Tab>
          ))}
          <NewTab><Plus /></NewTab>
        </TabStrip>

        <Toolbar>
          <BackButton><ArrowLeft /></BackButton>
          <IconSlot $before={20} $color="#b5b5b6"><ArrowRight /></IconSlot>
          <IconSlot $before={41}><Reload /></IconSlot>
          <IconSlot $before={39}><Home /></IconSlot>
          <UrlBar>
            <Shield />
            <Rule $h={52} $before={14} />
            <IconSlot $before={16}><Lock /></IconSlot>
            <UrlText>
              <Label w={112}>https://</Label>
              <Host><Label w={251}>shalant.github.io</Label></Host>
              <Label w={219}>/WeatherApp/</Label>
            </UrlText>
            <UrlActions><Dots /><Pocket /><Star /></UrlActions>
          </UrlBar>
          <IconSlot $before={313} $color="#0a84ff"><Download /></IconSlot>
          <IconSlot $before={40}><Library /></IconSlot>
          <IconSlot $before={40}><Sidebar /></IconSlot>
          <IconSlot $before={40}><Account /></IconSlot>
          <IconSlot $before={40}><PrivacySearch /></IconSlot>
          <Rule $h={85} $before={27} />
          <IconSlot $before={33}><Hamburger /></IconSlot>
        </Toolbar>

        <BookmarkBar>
          {bookmarks.map(b => (
            <Bookmark key={b.title} $after={b.after} $gap={b.gap}>
              {b.icon}
              <BookmarkTitle><Label w={b.w}>{b.title}</Label></BookmarkTitle>
            </Bookmark>
          ))}
          <Overflow><Chevrons /></Overflow>
        </BookmarkBar>

        <WeatherGrid>
          <Panel $area="1 / 1 / 2 / 4">
            <Heading><Label w={434}>Weather App</Label></Heading>
          </Panel>
          <Panel $area="2 / 1 / 4 / 2">
            <CityField><Label w={283}>Search for a city</Label></CityField>
            <SearchButton><FaSearch size={38} /></SearchButton>
          </Panel>
          <Panel $area="2 / 2 / 3 / 3">
            <Heading><Label w={548}>Current Weather</Label></Heading>
          </Panel>
          <Panel $area="3 / 2 / 4 / 4">
            <Heading><Label w={513}>5-Day Forecast:</Label></Heading>
          </Panel>
        </WeatherGrid>

        <TaskBar>
          <Start><WinLogo /></Start>
          <TaskSearch>
            <BigLens />
            <TaskSearchText><Label w={326}>Type here to search</Label></TaskSearchText>
          </TaskSearch>
          <ShellButton><Cortana /></ShellButton>
          <ShellButton><TaskView /></ShellButton>
          <AppList>
            {apps.map((a, i) => (
              <AppButton key={i} $state={a.state}>
                {a.icon}
                {a.badge && <Badge>{a.badge}</Badge>}
              </AppButton>
            ))}
          </AppList>
          <Tray>
            <TrayItem $after={42}><Caret /></TrayItem>
            <TrayItem $after={48}><Speaker /></TrayItem>
            <TrayItem $after={44}><Pen /></TrayItem>
            <Clock>
              <Label w={122}>10:09 PM</Label>
              <Label w={138}>8/25/2020</Label>
            </Clock>
            <TrayItem $after={49}><Notice /></TrayItem>
            <ShowDesktop />
          </Tray>
        </TaskBar>
      </Screen>
    </>
  );
}
